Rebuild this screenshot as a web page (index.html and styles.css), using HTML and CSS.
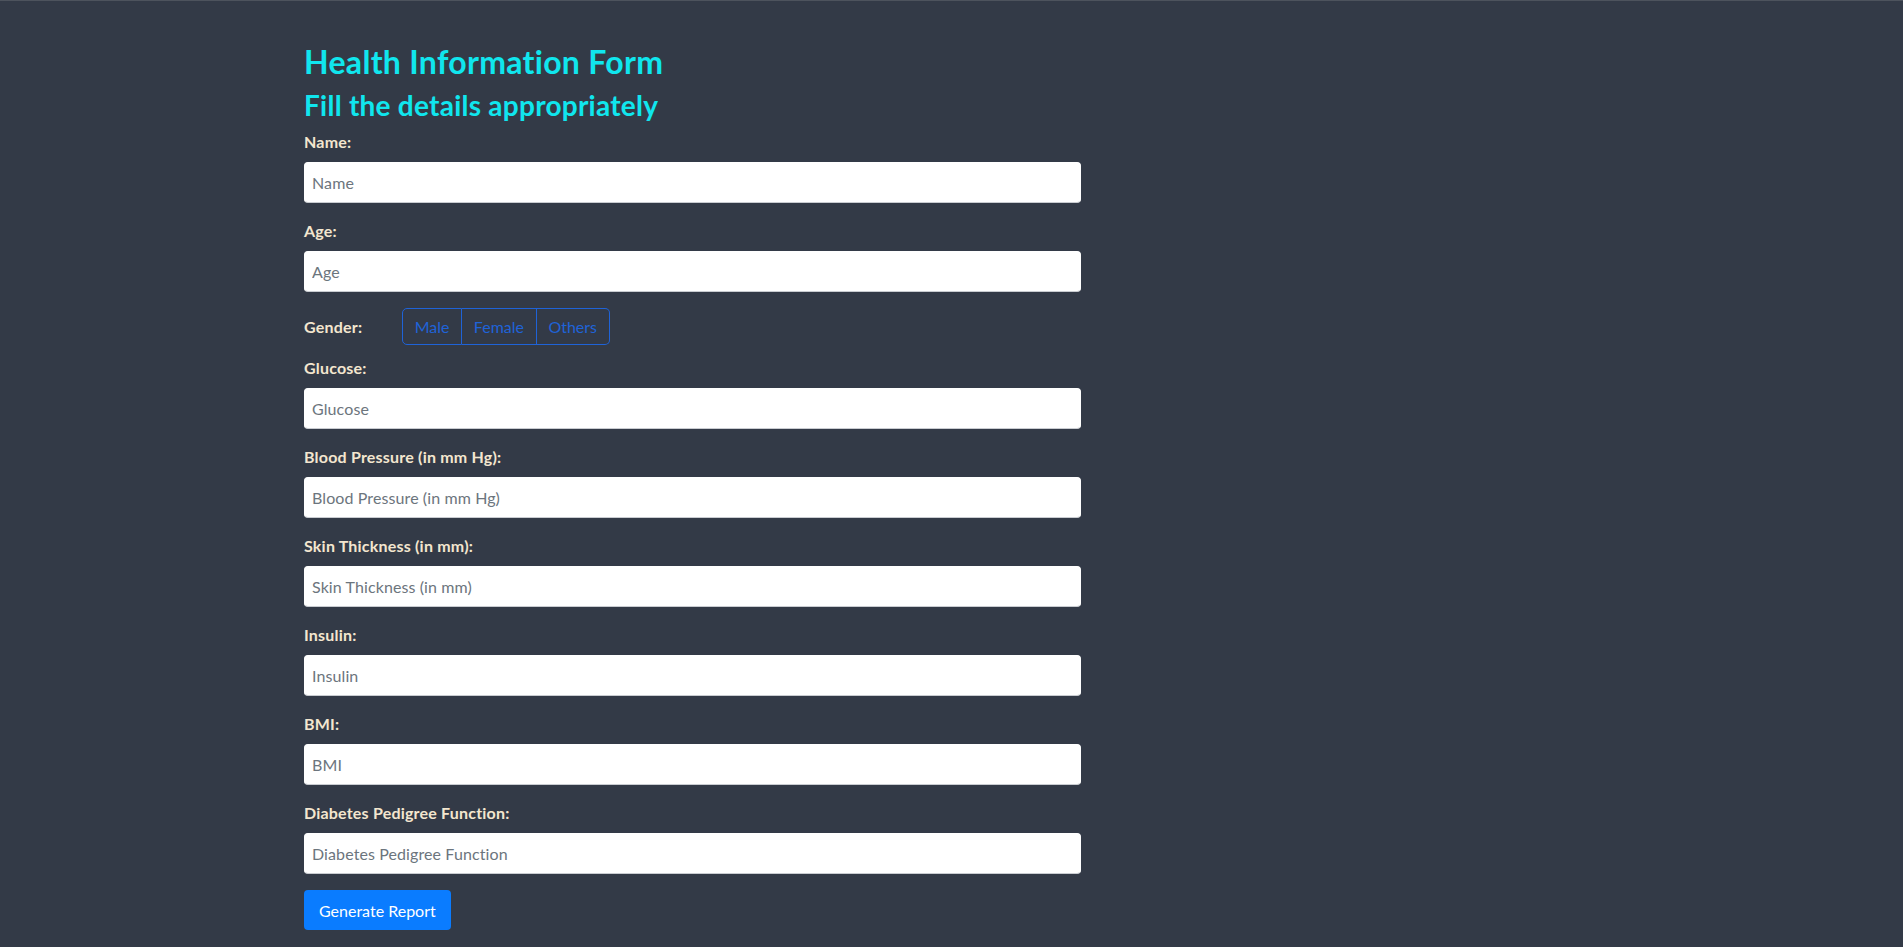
FILE: index.html
```html
<!DOCTYPE html>
<html lang="en">
<head>
<meta charset="utf-8">
<title>Health Information Form</title>
<link rel="stylesheet" href="styles.css">
</head>
<body>
<main class="page">
  <form class="form">
    <h1 class="title">Health Information Form</h1>
    <h2 class="subtitle">Fill the details appropriately</h2>

    <div class="group">
      <label class="label" for="name">Name:</label>
      <input class="input" id="name" type="text" placeholder="Name">
    </div>
    <div class="group">
      <label class="label" for="age">Age:</label>
      <input class="input" id="age" type="text" placeholder="Age">
    </div>
    <div class="gender-row">
      <span class="label gender-label">Gender:</span>
      <div class="btn-group">
        <button type="button" class="seg">Male</button>
        <button type="button" class="seg">Female</button>
        <button type="button" class="seg">Others</button>
      </div>
    </div>
    <div class="group">
      <label class="label" for="glucose">Glucose:</label>
      <input class="input" id="glucose" type="text" placeholder="Glucose">
    </div>
    <div class="group">
      <label class="label" for="bp">Blood Pressure (in mm Hg):</label>
      <input class="input" id="bp" type="text" placeholder="Blood Pressure (in mm Hg)">
    </div>
    <div class="group">
      <label class="label" for="skin">Skin Thickness (in mm):</label>
      <input class="input" id="skin" type="text" placeholder="Skin Thickness (in mm)">
    </div>
    <div class="group">
      <label class="label" for="insulin">Insulin:</label>
      <input class="input" id="insulin" type="text" placeholder="Insulin">
    </div>
    <div class="group">
      <label class="label" for="bmi">BMI:</label>
      <input class="input" id="bmi" type="text" placeholder="BMI">
    </div>
    <div class="group">
      <label class="label" for="dpf">Diabetes Pedigree Function:</label>
      <input class="input" id="dpf" type="text" placeholder="Diabetes Pedigree Function">
    </div>
    <button type="submit" class="submit">Generate Report</button>
  </form>
</main>
</body>
</html>
```

FILE: styles.css
```css
html, body {
  margin: 0;
  padding: 0;
}
body {
  background: #333a47;
  border-top: 1px solid #4d535d;
  min-height: 946px;
  font-family: Lato, "Open Sans", "Liberation Sans", sans-serif;
  font-size: 16px;
  line-height: 24px;
}
.page {
  padding: 0 0 0 304px;
}
.form {
  width: 777px;
  display: flex;
  flex-direction: column;
  align-items: flex-start;
}
.title {
  margin: 42px 0 0;
  font-size: 32px;
  font-weight: 700;
  line-height: 38px;
  letter-spacing: 0.3px;
  color: #10e6ee;
}
.subtitle {
  margin: 9px 0 9px;
  font-size: 28px;
  font-weight: 700;
  line-height: 31px;
  letter-spacing: 0.25px;
  color: #10e6ee;
}
.group {
  width: 100%;
  margin-bottom: 16px;
}
.label {
  display: block;
  margin-bottom: 8px;
  font-weight: 700;
  letter-spacing: 0.2px;
  color: #f3e6cf;
}
.input {
  display: block;
  box-sizing: border-box;
  width: 100%;
  height: 41px;
  margin: 0;
  padding: 0 7px;
  border: 1px solid #ffffff;
  border-bottom-color: #c9ccd1;
  border-radius: 4px;
  background: #fff;
  font-family: inherit;
  font-size: 16px;
  letter-spacing: 0.1px;
  color: #495057;
}
.input::placeholder {
  color: #6c757d;
}
.gender-row {
  display: flex;
  align-items: center;
  margin-bottom: 11px;
}
.gender-label {
  margin: 0;
  width: 98px;
}
.btn-group {
  display: flex;
}
.seg {
  height: 37px;
  padding: 0 11.7px;
  margin: 0;
  background: transparent;
  border: 1px solid #1f63d8;
  border-left-width: 0;
  color: #1f63d8;
  font-family: inherit;
  font-size: 16px;
}
.seg:first-child {
  border-left-width: 1px;
  border-radius: 5px 0 0 5px;
}
.seg:last-child {
  border-radius: 0 5px 5px 0;
}
.submit {
  height: 40px;
  padding: 0 15px;
  margin: 0;
  border: none;
  border-radius: 4px;
  background: #0a7cff;
  color: #fff;
  font-family: inherit;
  font-size: 16px;
}
```
